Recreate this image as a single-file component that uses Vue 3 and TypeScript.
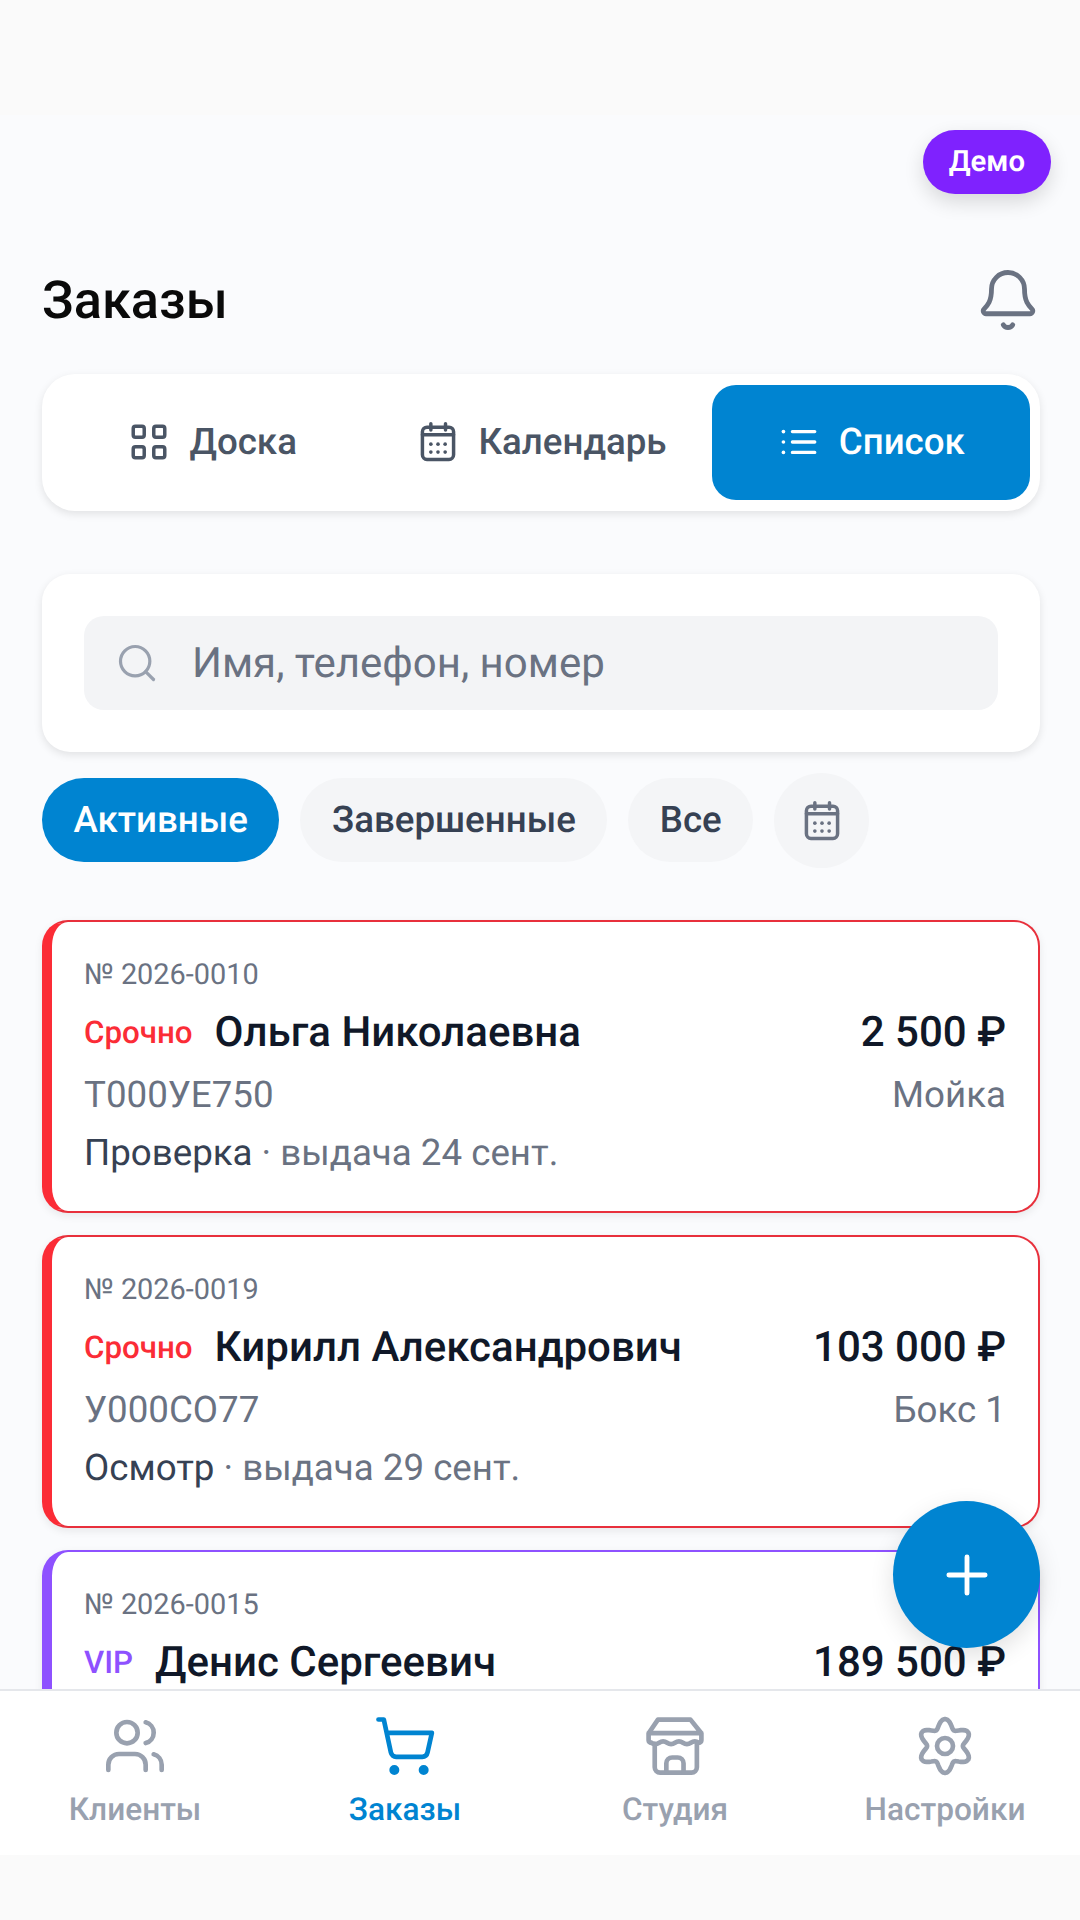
<template>
  <div class="screen">
    <div class="status-space"></div>

    <main class="content">
      <div class="demo-row">
        <span class="demo-badge">Демо</span>
      </div>

      <header class="page-head">
        <h1>Заказы</h1>
        <svg class="bell" viewBox="0 0 24 24" fill="none" stroke="currentColor" stroke-width="1.75" stroke-linecap="round" stroke-linejoin="round">
          <path d="M10.268 21a2 2 0 0 0 3.464 0"/>
          <path d="M3.262 15.326A1 1 0 0 0 4 17h16a1 1 0 0 0 .74-1.673C19.41 13.956 18 12.499 18 8A6 6 0 0 0 6 8c0 4.499-1.411 5.956-2.738 7.326"/>
        </svg>
      </header>

      <nav class="view-tabs">
        <button class="view-tab">
          <svg viewBox="0 0 24 24" fill="none" stroke="currentColor" stroke-width="1.9" stroke-linejoin="round">
            <rect x="3.4" y="3.4" width="6" height="6" rx="1.2"/>
            <rect x="14.6" y="3.4" width="6" height="6" rx="1.2"/>
            <rect x="3.4" y="14.6" width="6" height="6" rx="1.2"/>
            <rect x="14.6" y="14.6" width="6" height="6" rx="1.2"/>
          </svg>
          <span>Доска</span>
        </button>
        <button class="view-tab">
          <svg viewBox="0 0 24 24" fill="none" stroke="currentColor" stroke-width="1.9" stroke-linecap="round">
            <rect x="3.5" y="3.9" width="17" height="17.6" rx="2.5"/>
            <path d="M3.5 8h17M8.1 2v3.5M16.1 2v3.5"/>
            <g fill="currentColor" stroke="none">
              <circle v-for="d in calendarDots" :key="d.x + '-' + d.y" :cx="d.x" :cy="d.y" r="1"/>
            </g>
          </svg>
          <span>Календарь</span>
        </button>
        <button class="view-tab active">
          <svg viewBox="0 0 24 24" fill="none" stroke="currentColor" stroke-width="1.8" stroke-linecap="round">
            <path d="M8.4 6.3h12.2M8.4 12h12.2M8.4 17.7h12.2"/>
            <g fill="currentColor" stroke="none">
              <circle cx="3.5" cy="6.3" r="1"/>
              <circle cx="3.5" cy="12" r="1"/>
              <circle cx="3.5" cy="17.7" r="1"/>
            </g>
          </svg>
          <span>Список</span>
        </button>
      </nav>

      <section class="search-card">
        <div class="search-box">
          <svg viewBox="0 0 24 24" fill="none" stroke="currentColor" stroke-width="1.75" stroke-linecap="round" stroke-linejoin="round">
            <circle cx="11" cy="11" r="8"/>
            <path d="m21 21-4.3-4.3"/>
          </svg>
          <span>Имя, телефон, номер</span>
        </div>
      </section>

      <div class="chips">
        <button class="chip active">Активные</button>
        <button class="chip">Завершенные</button>
        <button class="chip">Все</button>
        <button class="chip-icon">
          <svg viewBox="0 0 24 24" fill="none" stroke="currentColor" stroke-width="1.9" stroke-linecap="round">
            <rect x="3.5" y="3.9" width="17" height="17.6" rx="2.5"/>
            <path d="M3.5 8h17M8.1 2v3.5M16.1 2v3.5"/>
            <g fill="currentColor" stroke="none">
              <circle v-for="d in calendarDots" :key="d.x + '-' + d.y" :cx="d.x" :cy="d.y" r="1"/>
            </g>
          </svg>
        </button>
      </div>

      <div class="orders">
        <article v-for="o in orders" :key="o.no" class="order" :class="o.kind">
          <div class="order-no">№ {{ o.no }}</div>
          <div class="order-row main">
            <div class="who">
              <span class="tag">{{ o.tag }}</span>
              <span class="name">{{ o.name }}</span>
            </div>
            <span class="price">{{ o.price }}</span>
          </div>
          <template v-if="o.plate">
            <div class="order-row sub">
              <span>{{ o.plate }}</span>
              <span>{{ o.place }}</span>
            </div>
            <div class="order-status"><b>{{ o.status }}</b> · выдача {{ o.date }}</div>
          </template>
        </article>
      </div>

      <button class="fab">
        <svg viewBox="0 0 24 24" fill="none" stroke="currentColor" stroke-width="2" stroke-linecap="round">
          <path d="M12 4.5v15m7.5-7.5h-15"/>
        </svg>
      </button>
    </main>

    <footer class="bottom-nav">
      <a class="nav-item">
        <svg viewBox="0 0 24 24" fill="none" stroke="currentColor" stroke-width="1.75" stroke-linecap="round" stroke-linejoin="round">
          <path d="M16 21v-2a4 4 0 0 0-4-4H6a4 4 0 0 0-4 4v2"/>
          <circle cx="9" cy="7" r="4"/>
          <path d="M22 21v-2a4 4 0 0 0-3-3.87M16 3.13a4 4 0 0 1 0 7.75"/>
        </svg>
        <span>Клиенты</span>
      </a>
      <a class="nav-item active">
        <svg viewBox="0 0 24 24" fill="none" stroke="currentColor" stroke-width="1.75" stroke-linecap="round" stroke-linejoin="round">
          <path d="M2.05 2.05h2l2.66 12.42a2 2 0 0 0 2 1.58h9.78a2 2 0 0 0 1.95-1.57l1.65-7.43H5.12"/>
          <circle cx="8" cy="21" r="1" fill="currentColor"/>
          <circle cx="19" cy="21" r="1" fill="currentColor"/>
        </svg>
        <span>Заказы</span>
      </a>
      <a class="nav-item">
        <svg viewBox="0 0 24 24" fill="none" stroke="currentColor" stroke-width="1.75" stroke-linecap="round" stroke-linejoin="round">
          <path d="M2.1 7.2 5.6 2.1h12.2l4.1 5.1zM2.1 7.2v2.6a1 1 0 0 0 1 1M21.9 7.2v2.6a1 1 0 0 1-1 1"/>
          <path d="M3.1 10.8q1.49 1 2.97 0t2.97 0 2.96 0 2.97 0 2.97 0 2.96 0"/>
          <path d="M4.4 11.2V20a2 2 0 0 0 2 2h11.8a2 2 0 0 0 2-2v-8.8"/>
          <path d="M8.75 22v-3.5a2.2 2.2 0 0 1 2.2-2.2H13a2.2 2.2 0 0 1 2.2 2.2V22"/>
        </svg>
        <span>Студия</span>
      </a>
      <a class="nav-item">
        <svg viewBox="0 0 24 24" fill="none" stroke="currentColor" stroke-width="1.75" stroke-linecap="round" stroke-linejoin="round">
          <path :d="gearPath"/>
          <circle cx="12" cy="12" r="3"/>
        </svg>
        <span>Настройки</span>
      </a>
    </footer>
    <div class="bottom-space"></div>
  </div>
</template>

<script setup lang="ts">
const calendarDots = [8.1, 12, 15.9].flatMap((x) => [13.2, 17.5].map((y) => ({ x, y })))

const orders = [
  { no: '2026-0010', kind: 'urgent', tag: 'Срочно', name: 'Ольга Николаевна', price: '2 500 ₽', plate: 'Т000УЕ750', place: 'Мойка', status: 'Проверка', date: '24 сент.' },
  { no: '2026-0019', kind: 'urgent', tag: 'Срочно', name: 'Кирилл Александрович', price: '103 000 ₽', plate: 'У000СО77', place: 'Бокс 1', status: 'Осмотр', date: '29 сент.' },
  { no: '2026-0015', kind: 'vip', tag: 'VIP', name: 'Денис Сергеевич', price: '189 500 ₽' },
]

// six soft lobes, one pointing straight up
function makeGear(): string {
  const pts: string[] = []
  for (let i = 0; i < 96; i++) {
    const a = (i / 96) * Math.PI * 2
    const r = 8.4 + 1.7 * Math.cos(6 * a)
    const x = 12 + r * Math.sin(a)
    const y = 12 - r * Math.cos(a)
    pts.push(x.toFixed(2) + ' ' + y.toFixed(2))
  }
  return 'M' + pts.join('L') + 'Z'
}

const gearPath = makeGear()
</script>

<style scoped>
.screen {
  height: 1920px;
  display: flex;
  flex-direction: column;
  overflow: hidden;
  background: #fafbfd;
  font-family: Roboto, "Noto Sans", sans-serif;
  text-rendering: geometricPrecision;
}

.screen button {
  text-rendering: geometricPrecision;
}

.status-space {
  height: 115px;
  flex-shrink: 0;
  background: #fafafa;
}

.content {
  position: relative;
  flex: 1;
  min-height: 0;
  overflow: hidden;
  padding: 0 40px 0 42px;
}

.demo-row {
  display: flex;
  justify-content: flex-end;
  padding-top: 15px;
  margin-right: -11px;
}

.demo-badge {
  height: 64px;
  padding: 0 26px;
  display: flex;
  align-items: center;
  border-radius: 32px;
  background: #7f22fe;
  color: #fff;
  font-size: 29.3px;
  font-weight: 600;
  box-shadow: 0 8px 20px rgba(0, 0, 0, 0.14);
}

.page-head {
  display: flex;
  align-items: center;
  justify-content: space-between;
  height: 66px;
  margin-top: 73px;
}

.page-head h1 {
  margin: 0;
  font-size: 52.25px;
  font-weight: 500;
  color: #0a0a0a;
}

.bell {
  width: 66px;
  height: 66px;
  color: #6a7282;
  margin-right: -1px;
}

.view-tabs {
  display: flex;
  gap: 11px;
  height: 137px;
  margin-top: 41px;
  padding: 11px 10px 11px 11px;
  box-sizing: border-box;
  background: #fff;
  border-radius: 33px;
  box-shadow: 0 3px 8px rgba(0, 0, 0, 0.1);
}

.view-tab {
  flex: 1;
  display: flex;
  align-items: center;
  justify-content: center;
  gap: 18px;
  padding: 0 0 2px;
  border: none;
  border-radius: 24px;
  background: transparent;
  color: #4a5565;
  font: 500 36.7px Roboto, sans-serif;
}

.view-tab svg {
  width: 44px;
  height: 44px;
}

.view-tab.active {
  background: #0084d1;
  color: #fff;
}

.search-card {
  margin-top: 63px;
  padding: 42px;
  background: #fff;
  border-radius: 28px;
  box-shadow: 0 3px 8px rgba(0, 0, 0, 0.1);
}

.search-box {
  height: 94px;
  display: flex;
  align-items: center;
  gap: 33px;
  padding-left: 31px;
  border-radius: 20px;
  background: #f3f4f6;
  color: #6a7282;
  font-size: 42px;
}

.search-box svg {
  width: 44px;
  height: 44px;
  color: #99a1af;
}

.chips {
  display: flex;
  align-items: center;
  gap: 21px;
  margin-top: 21px;
}

.chip {
  height: 84px;
  margin-bottom: 2px;
  padding: 0 31.5px;
  border: none;
  border-radius: 42px;
  background: #f4f5f7;
  color: #364153;
  font: 500 36.7px Roboto, sans-serif;
}

.chip.active {
  background: #0084d1;
  color: #fff;
}

.chip-icon {
  width: 95px;
  height: 95px;
  display: flex;
  align-items: center;
  justify-content: center;
  border: none;
  border-radius: 50%;
  background: #f4f5f7;
  color: #6a7282;
  padding: 0;
}

.chip-icon svg {
  width: 44px;
  height: 44px;
}

.orders {
  display: flex;
  flex-direction: column;
  gap: 22px;
  margin-top: 52px;
}

.order {
  height: 293px;
  flex-shrink: 0;
  box-sizing: border-box;
  padding: 33px 32px 0 32px;
  background: #fff;
  border: 2px solid #e8303c;
  border-left: 10px solid #fb2c36;
  border-radius: 26px;
  box-shadow: 0 3px 8px rgba(0, 0, 0, 0.08);
}

.order.vip {
  border-color: #8e51ff;
}

.order-no {
  font-size: 28.9px;
  line-height: 40px;
  color: #6a7282;
}

.order-row {
  display: flex;
  align-items: center;
  justify-content: space-between;
}

.order-row.main {
  margin-top: 12px;
  line-height: 52px;
}

.who {
  display: flex;
  align-items: center;
  gap: 22px;
}

.tag {
  font-size: 31.3px;
  font-weight: 500;
  color: #fb2c36;
}

.vip .tag {
  color: #8e51ff;
}

.name,
.price {
  font-size: 42px;
  font-weight: 500;
  color: #101828;
}

.order-row.sub {
  margin-top: 14px;
  font-size: 36.7px;
  line-height: 44px;
  color: #6a7282;
}

.order-status {
  margin-top: 14px;
  font-size: 36.7px;
  line-height: 44px;
  color: #6a7282;
}

.order-status b {
  font-weight: 400;
  color: #364153;
}

.fab {
  position: absolute;
  right: 40px;
  bottom: 41px;
  width: 147px;
  height: 147px;
  display: flex;
  align-items: center;
  justify-content: center;
  padding: 0;
  border: none;
  border-radius: 50%;
  background: #0084d1;
  color: #fff;
  box-shadow: 0 8px 24px rgba(0, 0, 0, 0.12);
}

.fab svg {
  width: 58px;
  height: 58px;
}

.bottom-nav {
  position: relative;
  height: 166px;
  flex-shrink: 0;
  box-sizing: border-box;
  display: grid;
  grid-template-columns: repeat(4, 1fr);
  border-top: 2px solid #e5e7eb;
  background: #fff;
}

.nav-item {
  display: flex;
  flex-direction: column;
  align-items: center;
  padding-top: 23px;
  color: #99a1af;
  font-size: 31.6px;
  font-weight: 500;
  line-height: 36px;
}

.nav-item svg {
  width: 64px;
  height: 64px;
  margin-bottom: 14px;
}

.nav-item.active {
  color: #0084d1;
}

.bottom-space {
  height: 65px;
  flex-shrink: 0;
  background: #fafafa;
}
</style>
